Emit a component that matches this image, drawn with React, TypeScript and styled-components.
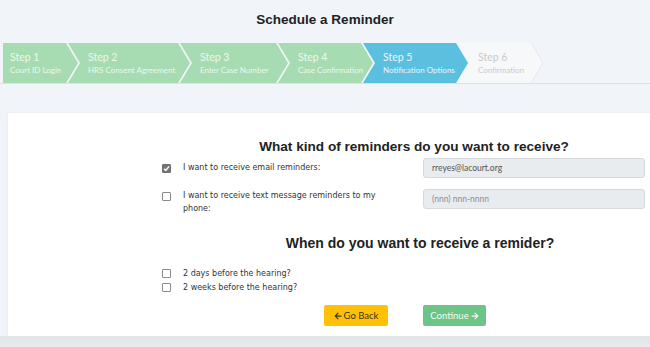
import React from "react";
import styled, { createGlobalStyle } from "styled-components";

const Global = createGlobalStyle`
  html, body { margin: 0; padding: 0; }
  body {
    background: #f1f4f9;
    font-family: "Liberation Sans", Arial, sans-serif;
    width: 650px;
    height: 347px;
    overflow: hidden;
  }
`;

const Page = styled.div`
  display: flex;
  flex-direction: column;
  height: 347px;
`;

const Title = styled.h1`
  margin: 0;
  height: 43px;
  display: flex;
  align-items: center;
  justify-content: center;
  font-size: 13.5px;
  font-weight: bold;
  color: #222;
  padding-bottom: 4px;
  box-sizing: border-box;
`;

const StepBar = styled.div`
  display: flex;
  height: 40px;
  padding-left: 3px;
  border-bottom: 1px solid #dde1e6;
`;

type StepState = "done" | "active" | "todo";

const bg: Record<StepState, string> = {
  done: "#a7dcb2",
  active: "#5bbfdf",
  todo: "#f7f8fa",
};

const StepItem = styled.div<{ $w: number; $state: StepState; $first?: boolean }>`
  position: relative;
  flex: none;
  width: ${(p) => p.$w}px;
  margin-left: ${(p) => (p.$first ? 0 : -10)}px;
  height: 40px;
  box-sizing: border-box;
  padding-left: ${(p) => (p.$first ? 7 : 20)}px;
  padding-top: 7px;
  background: ${(p) => bg[p.$state]};
  clip-path: ${(p) =>
    p.$first
      ? "polygon(0 0, calc(100% - 12px) 0, 100% 50%, calc(100% - 12px) 100%, 0 100%)"
      : "polygon(0 0, calc(100% - 12px) 0, 100% 50%, calc(100% - 12px) 100%, 0 100%, 12px 50%)"};
  font-family: Lato, "Open Sans", sans-serif;
  color: ${(p) => (p.$state === "todo" ? "#c9cbce" : p.$state === "active" ? "#eaf7fc" : "#eaf7ec")};
  white-space: nowrap;
`;

const StepNum = styled.div`
  font-size: 10.5px;
  line-height: 14px;
`;

const StepLabel = styled.div`
  font-size: 8px;
  line-height: 11px;
  margin-top: 1px;
`;

const Chevron = styled.svg`
  position: absolute;
  right: 0;
  top: 0;
`;

const Card = styled.div`
  margin: 29px 0 0 8px;
  height: 223px;
  background: #fff;
  box-shadow: 0 0 3px rgba(0, 0, 0, 0.05);
  padding-left: 152px;
  box-sizing: border-box;
  display: flex;
  flex-direction: column;
`;

const Heading = styled.h2<{ $shift: number; $top: number; $size: number }>`
  margin: ${(p) => p.$top}px 0 0 0;
  padding-left: ${(p) => p.$shift}px;
  text-align: center;
  font-size: ${(p) => p.$size}px;
  line-height: 18px;
  font-weight: bold;
  color: #222;
`;

const Row = styled.div<{ $top: number }>`
  display: grid;
  grid-template-columns: 23px 240px 222px;
  align-items: start;
  margin-top: ${(p) => p.$top}px;
`;

const Box = styled.span<{ $checked?: boolean }>`
  width: 9px;
  height: 9px;
  margin-left: 2px;
  box-sizing: border-box;
  border: 1px solid ${(p) => (p.$checked ? "#6f6f6f" : "#8a8a8a")};
  background: ${(p) => (p.$checked ? "#767676" : "#fff")};
  border-radius: 1px;
  display: flex;
  align-items: center;
  justify-content: center;
`;

const Label = styled.span`
  font-family: "DejaVu Sans", Verdana, sans-serif;
  font-size: 8px;
  line-height: 13px;
  color: #333;
  max-width: 205px;
`;

const Input = styled.div<{ $placeholder?: boolean }>`
  height: 20px;
  box-sizing: border-box;
  background: #e9ecef;
  border: 1px solid #d6dadf;
  border-radius: 3px;
  padding-left: 8px;
  display: flex;
  align-items: center;
  font-family: Lato, "Open Sans", sans-serif;
  font-size: 8.5px;
  color: ${(p) => (p.$placeholder ? "#8a8f95" : "#555")};
`;

const CheckList = styled.div`
  display: flex;
  flex-direction: column;
  gap: 1px;
  margin-top: 15px;
`;

const CheckLine = styled.div`
  display: grid;
  grid-template-columns: 23px auto;
  align-items: center;
  height: 13px;
`;

const Buttons = styled.div`
  display: flex;
  justify-content: center;
  gap: 35px;
  margin-top: 11px;
  width: 490px;
`;

const Button = styled.button<{ $kind: "back" | "next" }>`
  height: 21px;
  width: ${(p) => (p.$kind === "back" ? 64 : 63)}px;
  border: none;
  border-radius: 2px;
  background: ${(p) => (p.$kind === "back" ? "#ffc107" : "#6cc487")};
  color: ${(p) => (p.$kind === "back" ? "#3a3325" : "#f4fbf6")};
  font-family: Lato, "Open Sans", sans-serif;
  font-size: 9.5px;
  display: flex;
  align-items: center;
  justify-content: center;
  gap: 2px;
  padding: 0;
`;

const Footer = styled.div`
  margin-top: auto;
  height: 11px;
  background: linear-gradient(#e1e4e8, #e8ebee);
`;

const steps: { n: string; label: string; w: number; state: StepState }[] = [
  { n: "Step 1", label: "Court ID Login", w: 75, state: "done" },
  { n: "Step 2", label: "HRS Consent Agreement", w: 122, state: "done" },
  { n: "Step 3", label: "Enter Case Number", w: 108, state: "done" },
  { n: "Step 4", label: "Case Confirmation", w: 95, state: "done" },
  { n: "Step 5", label: "Notification Options", w: 105, state: "active" },
  { n: "Step 6", label: "Confirmation", w: 86, state: "todo" },
];

const Check = () => (
  <svg width="7" height="7" viewBox="0 0 8 8">
    <path d="M1.2 4.2 L3.2 6.2 L6.9 1.6" fill="none" stroke="#fff" strokeWidth="1.5" />
  </svg>
);

const ArrowLeft = () => (
  <svg width="8" height="8" viewBox="0 0 448 512">
    <path
      fill="currentColor"
      d="M257.5 445.1l-22.2 22.2c-9.4 9.4-24.6 9.4-33.9 0L7 273c-9.4-9.4-9.4-24.6 0-33.9L201.4 44.7c9.4-9.4 24.6-9.4 33.9 0l22.2 22.2c9.5 9.5 9.3 25-.4 34.3L136.6 216H424c13.3 0 24 10.7 24 24v32c0 13.3-10.7 24-24 24H136.6l120.5 114.8c9.8 9.3 10 24.8.4 34.3z"
    />
  </svg>
);

const ArrowRight = () => (
  <svg width="8" height="8" viewBox="0 0 448 512">
    <path
      fill="currentColor"
      d="M190.5 66.9l22.2-22.2c9.4-9.4 24.6-9.4 33.9 0L441 239c9.4 9.4 9.4 24.6 0 33.9L246.6 467.3c-9.4 9.4-24.6 9.4-33.9 0l-22.2-22.2c-9.5-9.5-9.3-25 .4-34.3L311.4 296H24c-13.3 0-24-10.7-24-24v-32c0-13.3 10.7-24 24-24h287.4L190.9 101.2c-9.8-9.3-10-24.8-.4-34.3z"
    />
  </svg>
);

export default function App() {
  return (
    <>
      <Global />
      <Page>
        <Title>Schedule a Reminder</Title>
        <StepBar>
          {steps.map((s, i) => (
            <StepItem key={s.n} $w={s.w} $state={s.state} $first={i === 0}>
              <StepNum>{s.n}</StepNum>
              <StepLabel>{s.label}</StepLabel>
              {s.state === "todo" && (
                <Chevron width="13" height="40" viewBox="0 0 13 40">
                  <polyline points="0.5,0 12,20 0.5,40" fill="none" stroke="#e3e5e8" strokeWidth="1" />
                </Chevron>
              )}
            </StepItem>
          ))}
        </StepBar>
        <Card>
          <Heading $shift={18} $top={25} $size={13.6}>
            What kind of reminders do you want to receive?
          </Heading>
          <Row $top={2}>
            <Box $checked style={{ marginTop: 6 }}>
              <Check />
            </Box>
            <Label style={{ paddingTop: 3 }}>I want to receive email reminders:</Label>
            <Input>rreyes@lacourt.org</Input>
          </Row>
          <Row $top={11}>
            <Box style={{ marginTop: 3 }} />
            <Label>I want to receive text message reminders to my phone:</Label>
            <Input $placeholder>(nnn) nnn-nnnn</Input>
          </Row>
          <Heading $shift={30} $top={19} $size={14}>
            When do you want to receive a remider?
          </Heading>
          <CheckList>
            <CheckLine>
              <Box />
              <Label>2 days before the hearing?</Label>
            </CheckLine>
            <CheckLine>
              <Box />
              <Label>2 weeks before the hearing?</Label>
            </CheckLine>
          </CheckList>
          <Buttons>
            <Button $kind="back">
              <ArrowLeft />
              Go Back
            </Button>
            <Button $kind="next">
              Continue
              <ArrowRight />
            </Button>
          </Buttons>
        </Card>
        <Footer />
      </Page>
    </>
  );
}
